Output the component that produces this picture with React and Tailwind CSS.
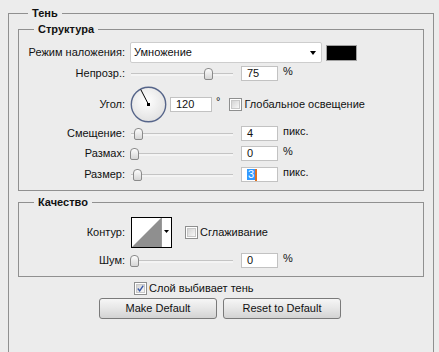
const font = { fontFamily: '"Liberation Sans", Arial, sans-serif' }

function Slider({ pos }) {
  return (
    <div className="relative w-[103px] h-[12px] shrink-0">
      <div className="absolute left-[1px] right-0 top-[5px] h-[3px] bg-[#f4f4f4] border-t border-[#c4c4c4]" />
      <div
        className="absolute top-0 w-[9px] h-[12px] rounded-t-[4px] rounded-b-[2px] border border-[#8a8a8a] bg-gradient-to-b from-[#fdfdfd] to-[#d6d6d6]"
        style={{ left: pos }}
      />
    </div>
  )
}

function Field({ value, w = 37, selected }) {
  return (
    <div
      className="h-[15px] bg-white border border-[#c2c2c2] flex items-center pl-[5px] text-[11px] leading-none text-[#111] shrink-0"
      style={{ width: w }}
    >
      {selected ? (
        <>
          <span className="bg-[#3399ff] text-white px-[1px]">{value}</span>
          <span className="w-[2px] h-[12px] bg-[#e07020]" />
        </>
      ) : (
        value
      )}
    </div>
  )
}

function Check({ checked }) {
  return (
    <div className="w-[13px] h-[13px] border border-[#8e8f8f] bg-white p-[1px] shrink-0">
      <div className="w-full h-full bg-gradient-to-br from-[#d4d4d4] to-[#f7f7f7] border border-[#c8c8c8] flex items-center justify-center">
        {checked && (
          <svg width="9" height="9" viewBox="0 0 9 9">
            <path d="M1 4.5 L3.5 7.5 L8 0.8" fill="none" stroke="#3b5aa8" strokeWidth="1.8" />
          </svg>
        )}
      </div>
    </div>
  )
}

function Label({ children }) {
  return <div className="w-[107px] shrink-0 text-right pr-[1px]">{children}</div>
}

function SliderRow({ label, pos, value, unit, h, selected }) {
  return (
    <div className="flex items-center" style={{ height: h }}>
      <Label>{label}</Label>
      <div className="ml-[4px] flex items-center">
        <Slider pos={pos} />
        <div className="ml-[8px] flex items-start">
          <Field value={value} selected={selected} />
          <span className="ml-[5px] -mt-[1px]">{unit}</span>
        </div>
      </div>
    </div>
  )
}

function Dial() {
  return (
    <svg width="37" height="37" viewBox="0 0 37 37" className="shrink-0">
      <defs>
        <radialGradient id="dg" cx="45%" cy="40%" r="60%">
          <stop offset="0%" stopColor="#ffffff" />
          <stop offset="100%" stopColor="#e2e2e2" />
        </radialGradient>
      </defs>
      <circle cx="18.5" cy="18.5" r="17.2" fill="url(#dg)" stroke="#56658a" strokeWidth="1.4" />
      <line x1="18.5" y1="18.5" x2="10.8" y2="3.6" stroke="#000" strokeWidth="1" />
      <rect x="17" y="17" width="3" height="3" fill="#000" />
    </svg>
  )
}

function Contour() {
  return (
    <div className="ml-[1px] w-[41px] h-[31px] border border-black bg-white flex shrink-0">
      <svg width="29" height="29" viewBox="0 0 29 29" className="shrink-0">
        <polygon points="0,29 29,0 29,29" fill="#8f8f8f" />
      </svg>
      <div className="flex-1 border-l border-[#9a9a9a] flex justify-center pt-[12px]">
        <svg width="5" height="3" viewBox="0 0 5 3">
          <polygon points="0,0 5,0 2.5,3" fill="#000" />
        </svg>
      </div>
    </div>
  )
}

function Button({ children }) {
  return (
    <button className="w-[118px] h-[21px] rounded-[3px] border border-[#7a7a7a] bg-gradient-to-b from-[#f6f6f6] via-[#e6e6e6] to-[#d3d3d3] text-[11px] text-[#111] leading-none">
      {children}
    </button>
  )
}

export default function App() {
  return (
    <div
      className="w-[439px] h-[352px] overflow-hidden bg-[#ececec] text-[11px] leading-[13px] text-[#111] pl-[8px] pr-[5px] pt-[7px]"
      style={font}
    >
      <fieldset className="border border-[#909090] h-[360px] px-[9px]">
        <legend className="ml-[10px] px-[4px] font-bold leading-[13px]">Тень</legend>

        <fieldset className="mt-[3px] border border-[#909090] pb-[5px]">
          <legend className="ml-[15px] px-[4px] font-bold leading-[13px]">Структура</legend>
          <div className="mt-[6px]">
            <div className="flex items-center h-[21px]">
              <Label>Режим наложения:</Label>
              <div className="ml-[4px] w-[192px] h-[21px] bg-white border border-[#cdcdcd] rounded-[2px] flex items-center justify-between pl-[3px] pr-[5px]">
                <span>Умножение</span>
                <svg width="6" height="4" viewBox="0 0 6 4">
                  <polygon points="0,0 6,0 3,4" fill="#000" />
                </svg>
              </div>
              <div className="ml-[4px] w-[31px] h-[16px] bg-black border border-[#a0a0a0]" />
            </div>

            <SliderRow label="Непрозр.:" pos={74} value="75" unit="%" h={21} />

            <div className="flex items-center h-[40px]">
              <Label>Угол:</Label>
              <div className="ml-[4px] flex items-center">
                <Dial />
                <div className="ml-[3px] flex items-start">
                  <Field value="120" w={42} />
                  <span className="ml-[4px] -mt-[2px]">°</span>
                </div>
                <div className="ml-[9px]">
                  <Check />
                </div>
                <span className="ml-[2px]">Глобальное освещение</span>
              </div>
            </div>

            <SliderRow label="Смещение:" pos={4} value="4" unit="пикс." h={19} />
            <SliderRow label="Размах:" pos={0} value="0" unit="%" h={21} />
            <SliderRow label="Размер:" pos={3} value="3" unit="пикс." h={21} selected />
          </div>
        </fieldset>

        <fieldset className="mt-[5px] border border-[#909090] pb-[5px]">
          <legend className="ml-[15px] px-[4px] font-bold leading-[13px]">Качество</legend>
          <div className="mt-[5px]">
            <div className="flex items-center h-[36px]">
              <Label>Контур:</Label>
              <div className="ml-[4px] flex items-center">
                <Contour />
                <div className="ml-[13px]">
                  <Check />
                </div>
                <span className="ml-[2px]">Сглаживание</span>
              </div>
            </div>
            <SliderRow label="Шум:" pos={0} value="0" unit="%" h={21} />
          </div>
        </fieldset>

        <div className="mt-[5px] h-[13px] flex items-center pl-[116px]">
          <Check checked />
          <span className="ml-[2px]">Слой выбивает тень</span>
        </div>

        <div className="mt-[3px] flex justify-center gap-[6px] pr-[2px]">
          <Button>Make Default</Button>
          <Button>Reset to Default</Button>
        </div>
      </fieldset>
    </div>
  )
}
